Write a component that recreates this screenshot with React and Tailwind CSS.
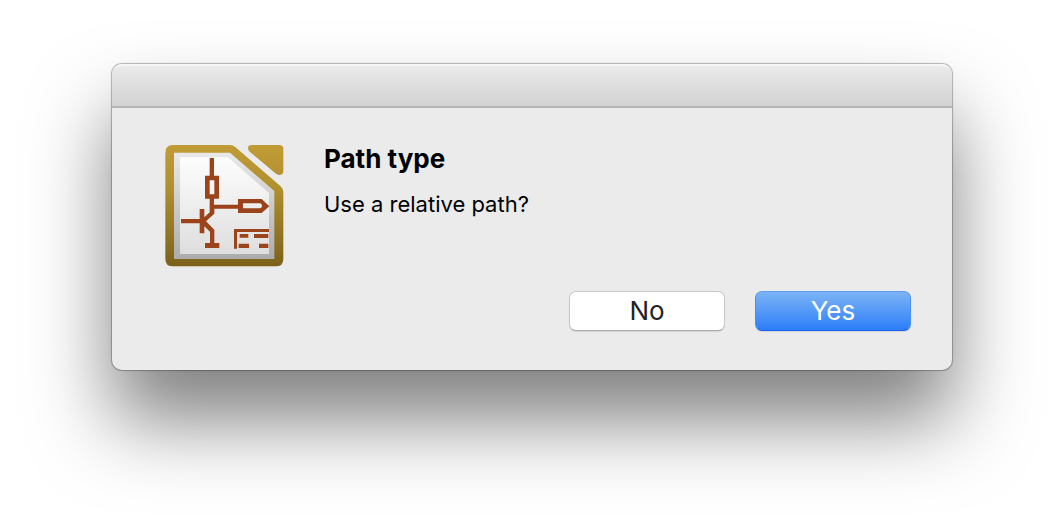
function SchematicIcon() {
  return (
    <svg
      className="h-[122px] w-[119px] shrink-0"
      viewBox="30 30 357 366"
      role="img"
      aria-label="Schematic document"
    >
      <defs>
        <linearGradient id="gold" gradientUnits="userSpaceOnUse" x1="0" y1="30" x2="0" y2="394">
          <stop offset="0" stopColor="#c19c35" />
          <stop offset="0.35" stopColor="#b08f2e" />
          <stop offset="1" stopColor="#7c611b" />
        </linearGradient>
        <linearGradient id="rim" gradientUnits="userSpaceOnUse" x1="0" y1="54" x2="0" y2="371">
          <stop offset="0" stopColor="#e9e9ea" />
          <stop offset="1" stopColor="#acacae" />
        </linearGradient>
        <linearGradient id="paper" gradientUnits="userSpaceOnUse" x1="0" y1="67" x2="0" y2="357">
          <stop offset="0" stopColor="#fdfdfd" />
          <stop offset="1" stopColor="#dedede" />
        </linearGradient>
      </defs>
      <path
        fill="url(#gold)"
        d="M54 30H224Q234 30 242 37L376 153Q385 161 385 171V371Q385 394 362 394H54Q31 394 31 371V53Q31 30 54 30Z"
      />
      <path
        fill="url(#gold)"
        d="M290 30H373Q385 30 385 42V108Q385 120 373 120Q367 120 361 115L285 51Q279 46 279 40Q279 30 290 30Z"
      />
      <path fill="url(#rim)" d="M57 53H225L358 168V372H57Z" />
      <path fill="url(#paper)" d="M75 67H219L342 174V357H75Z" />
      <g fill="#9b431b">
        <path d="M164 69H177V122H192V191H177V209H249V192H320L343 214L320 234H249V221H178V236L153 259L178 284V324H193V339H150V324H165V290L148 274V295H134V265H78V252H134V222H148V247L164 232V191H150V122H164ZM164 136V178H178V136ZM264 205V220H315Q321 219 321 213Q321 206 315 205Z" fillRule="evenodd" />
        <path d="M237 282H342V291H246V341H237Z" />
        <path d="M254 297H280V308H254ZM297 297H340V309H297ZM251 326H282V339H251ZM312 326H340V339H312Z" />
      </g>
    </svg>
  );
}

export default function App() {
  return (
    <main className="min-h-screen overflow-hidden bg-white px-28 py-16 font-['Inter','Liberation_Sans',sans-serif]">
      <section
        role="alertdialog"
        aria-labelledby="dialog-title"
        aria-describedby="dialog-message"
        className="rounded-[10px] bg-[#ebebeb] shadow-[0_0_1px_1px_rgba(0,0,0,0.28),0_50px_80px_rgba(0,0,0,0.5)]"
      >
        <div className="h-11 rounded-t-[10px] border-t-2 border-b-2 border-t-[#f5f5f5] border-b-[#b4b4b4] bg-linear-to-b from-[#eaeaea] to-[#d2d2d2]" />
        <div className="px-[41px] pt-[37px] pb-[39px]">
          <div className="flex gap-10 pl-3">
            <SchematicIcon />
            <div className="text-black">
              <h1 id="dialog-title" className="text-[26px] leading-7 font-bold">
                Path type
              </h1>
              <p id="dialog-message" className="mt-[15px] text-[22px] leading-8">
                Use a relative path?
              </p>
            </div>
          </div>
          <div className="mt-6 flex justify-end gap-[30px]">
            <button
              type="button"
              className="h-10 w-[156px] rounded-[7px] border border-[#c8c8c8] border-b-[#ababab] bg-white text-[26px] leading-8 text-[#222222] shadow-[0_1px_1px_rgba(0,0,0,0.1)]"
            >
              No
            </button>
            <button
              type="button"
              className="h-10 w-[156px] rounded-[7px] border border-x-[#4a90f2] border-t-[#5e9fee] border-b-[#1560f5] bg-linear-to-b from-[#7bb3f5] to-[#2c7df8] text-[26px] leading-8 text-white shadow-[0_1px_1px_rgba(0,0,0,0.1)]"
            >
              Yes
            </button>
          </div>
        </div>
      </section>
    </main>
  );
}
